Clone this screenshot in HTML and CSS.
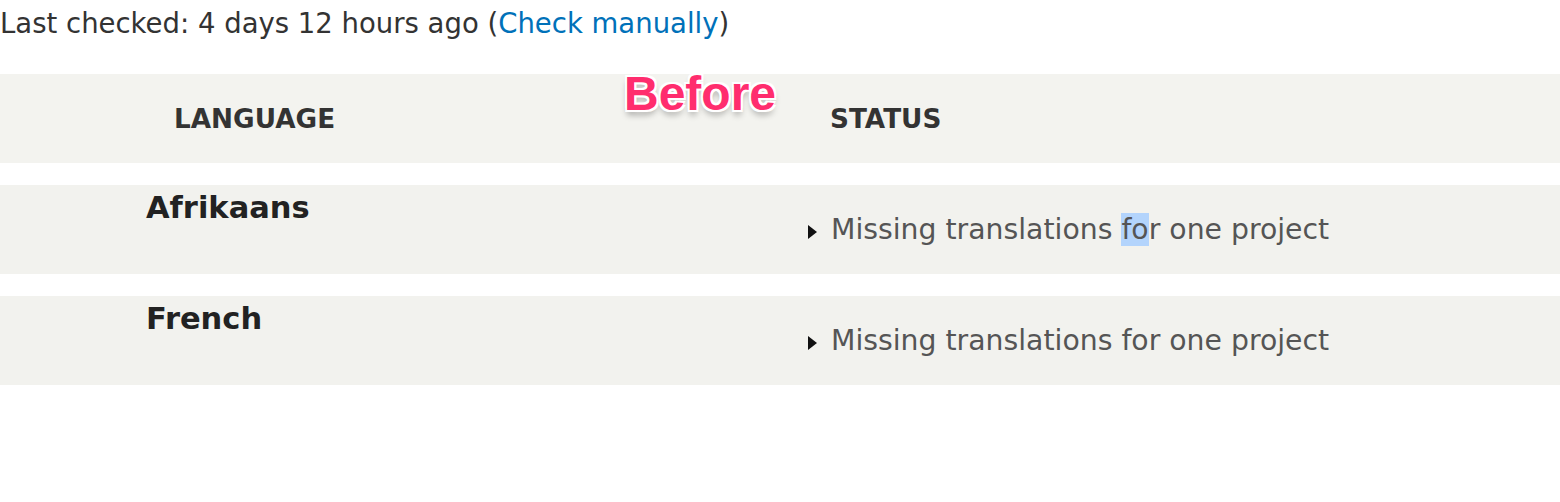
FILE: index.html
```html
<!DOCTYPE html>
<html lang="en">
<head>
    <meta charset="UTF-8">
    <title>Translation status</title>
    <link rel="stylesheet" href="styles.css">
</head>
<body>
    <p class="last-checked">Last checked: 4 days 12 hours ago (<a href="#">Check manually</a>)</p>
    <div class="status-table">
        <div class="row head">
            <div class="col-lang">LANGUAGE</div>
            <div class="col-status">STATUS</div>
            <span class="badge">Before</span>
        </div>
        <div class="row">
            <div class="col-lang">Afrikaans</div>
            <div class="col-status"><span class="arrow"></span><span>Missing translations <span class="sel">fo</span>r one project</span></div>
        </div>
        <div class="row">
            <div class="col-lang">French</div>
            <div class="col-status"><span class="arrow"></span><span>Missing translations for one project</span></div>
        </div>
    </div>
</body>
</html>
```

FILE: styles.css
```css
body {
    margin: 0;
    font-family: "DejaVu Sans", "Noto Sans", sans-serif;
    color: #333;
    background: #fff;
}

.last-checked {
    margin: 0;
    padding-top: 5px;
    font-size: 27.5px;
    line-height: 36px;
    color: #333;
}

.last-checked a {
    color: #0071b9;
    text-decoration: none;
}

.status-table {
    margin-top: 33px;
}

.row {
    position: relative;
    display: flex;
    height: 89px;
    background: #f2f2ee;
    margin-bottom: 22px;
}

.col-lang {
    width: 808px;
    box-sizing: border-box;
    padding-left: 146px;
    padding-top: 5px;
    font-size: 30.5px;
    font-weight: bold;
    color: #222;
}

.col-status {
    flex: 1;
    display: flex;
    align-items: center;
    font-size: 28.3px;
    color: #555;
}

.head {
    background: #f3f3ef;
}

.head .col-lang,
.head .col-status {
    display: flex;
    align-items: center;
    padding-top: 0;
    font-size: 26.3px;
    font-weight: bold;
    color: #333;
}

.head .col-lang {
    padding-left: 174px;
}

.head .col-status {
    padding-left: 22px;
}

.arrow {
    flex: none;
    width: 0;
    height: 0;
    border-top: 7px solid transparent;
    border-bottom: 7px solid transparent;
    border-left: 9px solid #111;
    margin-right: 14px;
    margin-top: 5px;
}

.sel {
    background: #b3d4fc;
}

.badge {
    position: absolute;
    left: 624px;
    top: -8px;
    font-family: "Liberation Sans", Arial, sans-serif;
    font-weight: bold;
    font-size: 48px;
    color: #ff2d6e;
    text-shadow: 0 0 3px #fff, 2px 2px 0 #fff, -2px -2px 0 #fff, 2px -2px 0 #fff, -2px 2px 0 #fff, 0 5px 6px rgba(0, 0, 0, 0.3);
}
```
